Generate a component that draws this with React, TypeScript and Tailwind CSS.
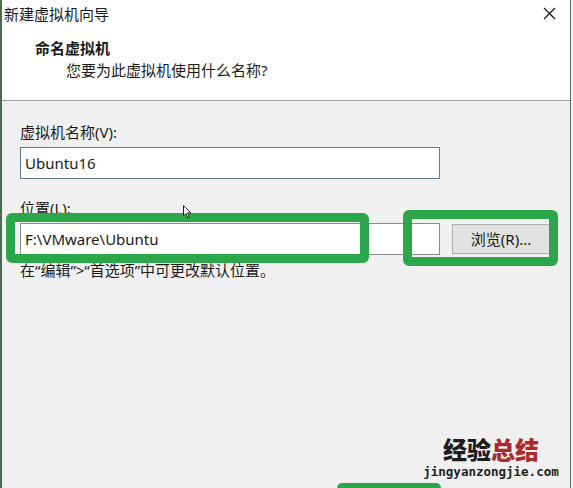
import React from 'react'

const font = "font-['Noto_Sans','Noto_Sans_CJK_SC',sans-serif]"

function Highlight({ className }: { className: string }) {
  return <div className={`absolute border-[9px] border-[#2ba64b] rounded-[6px] ${className}`} />
}

export default function App() {
  return (
    <div className={`relative w-[573px] h-[488px] overflow-hidden bg-[#f3f5f3] ${font} text-[#1a1a1a]`}>
      <div className="flex flex-col w-[571px] h-full border-l-2 border-r border-[#4d6b50] bg-[#f0f0f0]">
        {/* title bar */}
        <div className="flex items-center justify-between h-[28px] bg-white pl-[2px] pr-[14px]">
          <span className="text-[15px] leading-none">新建虚拟机向导</span>
          <svg width="13" height="13" viewBox="0 0 13 13" className="mt-[-2px]">
            <path d="M1 1 L12 12 M12 1 L1 12" stroke="#111" strokeWidth="1.2" />
          </svg>
        </div>

        {/* header */}
        <div className="h-[73px] bg-white border-b border-[#a3a3a3] pl-[33px] pt-[10px]">
          <div className="text-[15px] leading-[20px] font-bold">命名虚拟机</div>
          <div className="text-[15px] leading-[20px] pl-[31px] mt-[2px]">您要为此虚拟机使用什么名称?</div>
        </div>

        {/* body */}
        <div className="flex flex-col pl-[18px] pt-[21px]">
          <div className="text-[15px] leading-[20px]">虚拟机名称(V):</div>
          <div className="mt-[5px] w-[420px] h-[32px] bg-white border border-[#5a7b92] flex items-center pl-[4px] text-[15px]">
            Ubuntu16
          </div>

          <div className="mt-[19px] text-[15px] leading-[20px]">位置(L):</div>
          <div className="mt-[5px] flex items-center">
            <div className="w-[420px] h-[32px] bg-white border border-[#8a8a8a] flex items-center pl-[4px] text-[15px]">
              F:\VMware\Ubuntu
            </div>
            <div className="ml-[12px] w-[98px] h-[30px] bg-[#e1e1e1] border border-[#adadad] flex items-center justify-center text-[15px]">
              浏览(R)...
            </div>
          </div>

          <div className="mt-[5px] text-[15px] leading-[20px]">在“编辑”&gt;“首选项”中可更改默认位置。</div>
        </div>
      </div>

      {/* annotations */}
      <Highlight className="left-[6px] top-[213px] w-[363px] h-[50px]" />
      <Highlight className="left-[403px] top-[210px] w-[155px] h-[56px]" />

      <svg className="absolute left-[183px] top-[205px]" width="9" height="14" viewBox="0 0 9 14">
        <path d="M0.5 0.5 L0.5 11 L3 8.5 L5 13 L6.5 12.3 L4.6 8 L8 8 Z" fill="#fff" stroke="#222" strokeWidth="1" />
      </svg>

      <div className="absolute left-[421px] top-[436px] w-[140px] flex flex-col items-center">
        <div className="text-[24px] leading-[28px] font-black tracking-[0px]">
          <span className="text-[#1c1c1c]">经验</span>
          <span className="text-[#ad2a2c]">总结</span>
        </div>
        <div className="font-['DejaVu_Sans_Mono',monospace] font-bold text-[12.5px] leading-[16px] text-[#222]">
          jingyanzongjie.com
        </div>
      </div>

      <div className="absolute left-[337px] top-[483px] w-[104px] h-[10px] bg-[#2ba64b] rounded-t-[5px]" />
    </div>
  )
}
